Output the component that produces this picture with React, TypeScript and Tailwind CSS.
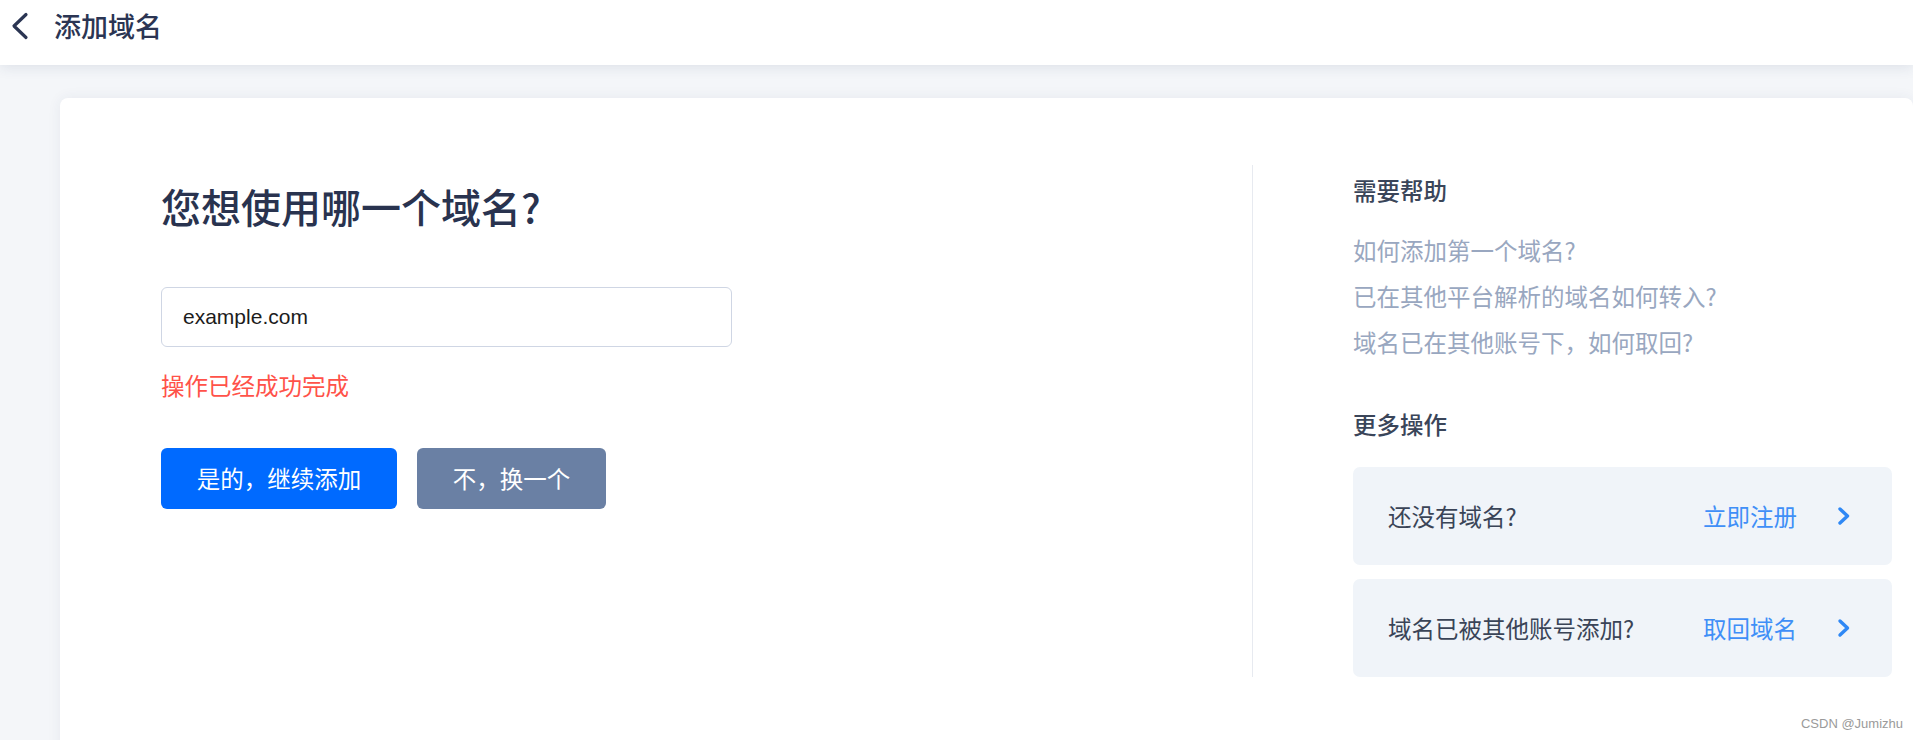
import { ReactNode } from "react";

function ActionCard({ label, action }: { label: string; action: ReactNode }) {
  return (
    <div className="flex items-center h-[98px] rounded-[7px] bg-[#f0f4f9] pl-[35px] pr-[41px]">
      <span className="flex-1 text-[23.5px] leading-[32px] text-[#3a4457]">{label}</span>
      <span className="text-[23.5px] leading-[32px] text-[#3f8ff7]">{action}</span>
      <svg width="14" height="20" viewBox="0 0 14 20" className="ml-[40px]" fill="none">
        <path d="M3 3 L10.5 10 L3 17" stroke="#2f88f5" strokeWidth="3.4" strokeLinecap="round" strokeLinejoin="round" />
      </svg>
    </div>
  );
}

export default function App() {
  const helpLinks = ["如何添加第一个域名?", "已在其他平台解析的域名如何转入?", "域名已在其他账号下，如何取回?"];

  return (
    <div className="relative h-[740px] overflow-hidden bg-[#f4f6f9] font-['Noto_Sans_CJK_SC','Noto_Sans',sans-serif]">
      {/* Header */}
      <header className="relative z-10 h-[65px] bg-white flex items-center pb-[14px] pl-[9px] shadow-[0_3px_12px_rgba(40,60,100,0.10)]">
        <svg width="20" height="28" viewBox="0 0 20 28" fill="none">
          <path d="M17 2.5 L5 14 L17 25.5" stroke="#2b3553" strokeWidth="3.2" strokeLinecap="round" strokeLinejoin="round" />
        </svg>
        <h1 className="ml-[25px] text-[27px] leading-[40px] font-medium text-[#2b3553]">添加域名</h1>
      </header>

      {/* Main card */}
      <div className="pl-[60px] pt-[33px]">
        <div className="flex h-[700px] rounded-[8px] bg-white pt-[67px] pl-[101px] pr-[21px] shadow-[0_0_14px_rgba(40,60,100,0.07)]">
          {/* Left */}
          <div className="flex-1 pt-[17px]">
            <h2 className="text-[40px] leading-[48px] font-medium text-[#29334f]">您想使用哪一个域名?</h2>
            <input
              readOnly
              defaultValue="example.com"
              className="mt-[57px] block w-[571px] h-[60px] rounded-[6px] border border-[#cfd6e4] px-[21px] text-[21px] text-[#1c1c1c] font-['Liberation_Sans',sans-serif] outline-none"
            />
            <p className="mt-[22px] text-[23.5px] leading-[32px] text-[#ff5249]">操作已经成功完成</p>
            <div className="mt-[47px] flex gap-[20px]">
              <button className="w-[236px] h-[61px] rounded-[6px] bg-[#006aff] text-white text-[23.5px]">是的，继续添加</button>
              <button className="w-[189px] h-[61px] rounded-[6px] bg-[#6a80a4] text-white text-[23.5px]">不，换一个</button>
            </div>
          </div>

          {/* Right */}
          <div className="w-[640px] self-start border-l border-[#e7eaf0] pl-[100px] pt-[9px]">
            <h3 className="text-[23.5px] leading-[32px] font-medium text-[#3a4559]">需要帮助</h3>
            <div className="mt-[28px] flex flex-col gap-[14px]">
              {helpLinks.map((t) => (
                <a key={t} className="text-[23.5px] leading-[32px] text-[#99a7c0]">{t}</a>
              ))}
            </div>
            <h3 className="mt-[50px] text-[23.5px] leading-[32px] font-medium text-[#3a4559]">更多操作</h3>
            <div className="mt-[27px] flex flex-col gap-[14px]">
              <ActionCard label="还没有域名?" action="立即注册" />
              <ActionCard label="域名已被其他账号添加?" action="取回域名" />
            </div>
          </div>
        </div>
      </div>

      <span className="absolute right-[10px] bottom-[7px] text-[13px] text-[#9a9a9a] font-['Liberation_Sans',sans-serif]">CSDN @Jumizhu</span>
    </div>
  );
}
